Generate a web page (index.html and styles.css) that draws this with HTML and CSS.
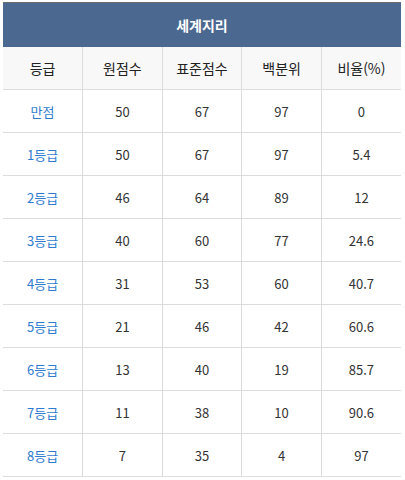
FILE: index.html
```html
<!DOCTYPE html>
<html lang="ko">
<head>
<meta charset="utf-8">
<link rel="stylesheet" href="styles.css">
</head>
<body>
<div class="wrap">
<table class="grade">
<thead>
<tr><th colspan="5" class="title">세계지리</th></tr>
<tr class="head"><th>등급</th><th>원점수</th><th>표준점수</th><th>백분위</th><th>비율(%)</th></tr>
</thead>
<tbody>
<tr><td class="g">만점</td><td>50</td><td>67</td><td>97</td><td>0</td></tr>
<tr><td class="g">1등급</td><td>50</td><td>67</td><td>97</td><td>5.4</td></tr>
<tr><td class="g">2등급</td><td>46</td><td>64</td><td>89</td><td>12</td></tr>
<tr><td class="g">3등급</td><td>40</td><td>60</td><td>77</td><td>24.6</td></tr>
<tr><td class="g">4등급</td><td>31</td><td>53</td><td>60</td><td>40.7</td></tr>
<tr><td class="g">5등급</td><td>21</td><td>46</td><td>42</td><td>60.6</td></tr>
<tr><td class="g">6등급</td><td>13</td><td>40</td><td>19</td><td>85.7</td></tr>
<tr><td class="g">7등급</td><td>11</td><td>38</td><td>10</td><td>90.6</td></tr>
<tr><td class="g">8등급</td><td>7</td><td>35</td><td>4</td><td>97</td></tr>
</tbody>
</table>
</div>
</body>
</html>
```
FILE: styles.css
```css
html, body { margin: 0; padding: 0; background: #fff; }
.wrap { padding: 2px 4px 0 3px; }
.grade {
  width: 398px;
  border-collapse: collapse;
  table-layout: fixed;
  font-family: "Noto Sans CJK KR", "Noto Sans", sans-serif;
  font-size: 13px;
  color: #333;
  border-top: 1px solid #6b6b6b;
}
.grade th, .grade td {
  height: 42px;
  padding: 0;
  text-align: center;
  vertical-align: middle;
  border-bottom: 1px solid #dcdcdc;
  border-left: 1px solid #dcdcdc;
  font-weight: normal;
}
.grade tr > :first-child { border-left: none; }
.grade .title {
  background: #4b6890;
  color: #fff;
  font-weight: bold;
  font-size: 14px;
  height: 44px;
  border-bottom: none;
}
.grade .head th { background: #f8f8f8; color: #222; font-size: 14px; }
.grade td.g { color: #2f7bd0; }
```
